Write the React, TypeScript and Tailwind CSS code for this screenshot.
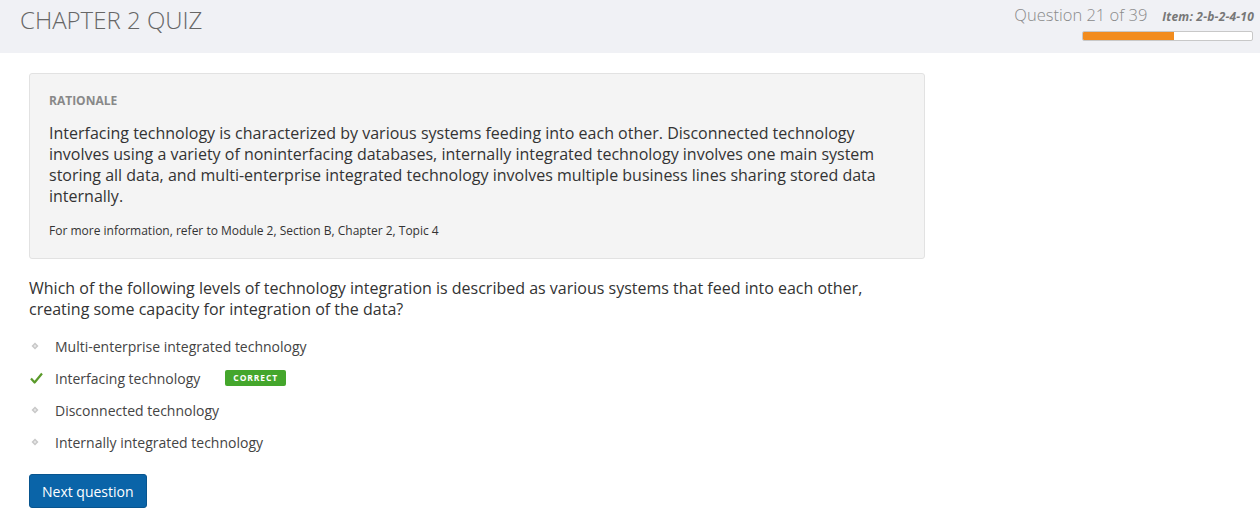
import React from 'react';

const options = [
  { label: 'Multi-enterprise integrated technology', correct: false },
  { label: 'Interfacing technology', correct: true },
  { label: 'Disconnected technology', correct: false },
  { label: 'Internally integrated technology', correct: false },
];

const current = 21;
const total = 39;

const Diamond = () => (
  <svg width="8" height="8" viewBox="0 0 8 8" className="shrink-0">
    <path d="M4 0.5 L7.5 4 L4 7.5 L0.5 4 Z" fill="#c8c8c8" />
    <path d="M4 2.5 L5.5 4 L4 5.5 L2.5 4 Z" fill="#e6e6e6" />
  </svg>
);

const Check = () => (
  <svg width="13" height="12" viewBox="0 0 13 12" className="shrink-0">
    <path d="M1 6.5 L4.6 10.5 L12 1.5" fill="none" stroke="#5a9a2a" strokeWidth="2.2" strokeLinejoin="round" />
  </svg>
);

export default function App() {
  return (
    <div className="min-h-[519px] bg-white text-[#333]" style={{ fontFamily: '"Open Sans", "Liberation Sans", sans-serif' }}>
      <header className="h-[53px] bg-[#f0f1f5] flex justify-between pl-[20px] pr-[6px]">
        <h1 className="text-[24px] font-light text-[#666] leading-none pt-[8px]">CHAPTER 2 QUIZ</h1>
        <div className="flex flex-col items-end pt-[3px]">
          <div className="flex items-baseline gap-[15px]">
            <span className="text-[16.5px] font-light text-[#8a8a8a]">Question {current} of {total}</span>
            <span className="text-[12px] font-bold italic text-[#777] tracking-[0.2px]">Item: 2-b-2-4-10</span>
          </div>
          <div className="mt-[3px] mr-[1px] w-[171px] h-[10px] border border-[#c8c8c8] bg-white rounded-[2px] overflow-hidden">
            <div className="h-full bg-[#f28c1e]" style={{ width: `${(current / total) * 100}%` }} />
          </div>
        </div>
      </header>

      <main className="px-[29px] pt-[20px]">
        <section className="w-[896px] bg-[#f4f4f4] border border-[#e2e2e2] rounded-[3px] px-[19px] pt-[19px] pb-[19px]">
          <h2 className="text-[12px] font-bold text-[#888] leading-[16px]">RATIONALE</h2>
          <p className="mt-[14px] text-[16px] leading-[21px] text-[#333]">
            Interfacing technology is characterized by various systems feeding into each other. Disconnected technology involves using a variety of noninterfacing databases, internally integrated technology involves one main system storing all data, and multi-enterprise integrated technology involves multiple business lines sharing stored data internally.
          </p>
          <p className="mt-[16px] text-[12px] leading-[16px] text-[#333]">
            For more information, refer to Module 2, Section B, Chapter 2, Topic 4
          </p>
        </section>

        <p className="mt-[19px] text-[16px] leading-[21px] text-[#333] w-[880px]">
          Which of the following levels of technology integration is described as various systems that feed into each other, creating some capacity for integration of the data?
        </p>

        <ul className="mt-[10px] flex flex-col">
          {options.map((o) => (
            <li key={o.label} className="h-[32px] flex items-center text-[14px] text-[#444]">
              <span className="w-[26px] flex pl-[1px]">
                {o.correct ? <Check /> : <span className="pl-[1px]"><Diamond /></span>}
              </span>
              <span>{o.label}</span>
              {o.correct && (
                <span className="ml-[25px] h-[16px] px-[8px] flex items-center bg-[#44a62c] text-white text-[8.5px] font-bold tracking-[0.9px] rounded-[2px]">
                  CORRECT
                </span>
              )}
            </li>
          ))}
        </ul>

        <button className="mt-[16px] h-[34px] px-[12px] bg-[#0a64a8] text-white text-[14px] rounded-[3px] border border-[#08558f]">
          Next question
        </button>
      </main>
    </div>
  );
}
